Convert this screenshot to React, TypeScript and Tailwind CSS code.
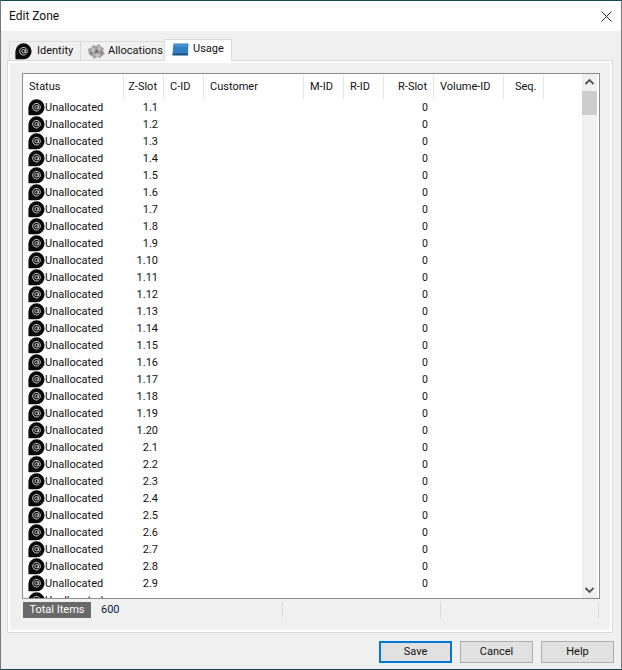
import React from "react";

const font = { fontFamily: 'Roboto, "Open Sans", sans-serif' };

function AtIcon({ className = "" }: { className?: string }) {
  return (
    <svg width="17" height="17" viewBox="0 0 17 17" className={className}>
      <path d="M8.6 0.3a8 8 0 0 1 8 8a8 8 0 0 1-8 8H1.4a1 1 0 0 1-1-1V8.3A8.2 8.2 0 0 1 8.6 0.3z" fill="#0a0a0a" />
      <circle cx="8.6" cy="8.2" r="1.7" fill="none" stroke="#cfcfcf" strokeWidth="1" />
      <path d="M10.3 6.5v2.6a1 1 0 0 0 2 0V8.2a3.8 3.8 0 1 0-1.6 3.1" fill="none" stroke="#cfcfcf" strokeWidth="1" />
    </svg>
  );
}

function GearBlob() {
  return (
    <svg width="18" height="15" viewBox="0 0 18 15">
      <path d="M1 5l4-2 1-2 3 1 3-2 2 3 3 1-1 3 2 3-3 2-2 2-3-1-3 2-2-3-3-1z" fill="#a3a3a3" />
      <path d="M4 3l4 2-2 4zM11 2l3 3-3 2zM7 10l4-1 2 3-4 1z" fill="#c4c4c4" />
      <path d="M9 5l3 3-4 2z" fill="#6e6e6e" />
      <path d="M2 9l3-1 1 3zM13 8l3-1-1 4z" fill="#808080" />
    </svg>
  );
}

function BlueCard() {
  return (
    <svg width="17" height="13" viewBox="0 0 17 13">
      <path d="M1.5 0.5h15l-0.5 10.5H0.5z" fill="#2f80c2" />
      <path d="M0.5 10.5h15.5v2H0.5z" fill="#1d4f7c" />
      <path d="M3 1.5h12.5l-0.2 2H2.8z" fill="#4a98d4" />
    </svg>
  );
}

const columns = [
  { label: "Status", w: "w-[101px]", align: "text-left pl-[6px]" },
  { label: "Z-Slot", w: "w-[40px]", align: "text-right pr-[6px]" },
  { label: "C-ID", w: "w-[40px]", align: "text-left pl-[6px]" },
  { label: "Customer", w: "w-[100px]", align: "text-left pl-[6px]" },
  { label: "M-ID", w: "w-[40px]", align: "text-left pl-[6px]" },
  { label: "R-ID", w: "w-[40px]", align: "text-left pl-[6px]" },
  { label: "R-Slot", w: "w-[50px]", align: "text-right pr-[6px]" },
  { label: "Volume-ID", w: "w-[70px]", align: "text-left pl-[6px]" },
  { label: "Seq.", w: "w-[40px]", align: "text-left pl-[11px]" },
];

const slots: string[] = [];
for (let i = 1; i <= 20; i++) slots.push(`1.${i}`);
for (let i = 1; i <= 9; i++) slots.push(`2.${i}`);

export default function App() {
  return (
    <div
      className="w-[622px] h-[670px] flex flex-col bg-[#f0f0f0] border border-[#6f7a7a] border-t-[#17494f] border-b-[#17494f] text-[11px] text-[#111] overflow-hidden"
      style={font}
    >
      <div className="h-[30px] shrink-0 bg-white flex items-center justify-between pl-[8px] pr-[9px]">
        <span className="text-[12px]">Edit Zone</span>
        <svg width="11" height="11" viewBox="0 0 11 11">
          <path d="M0.5 0.5l10 10M10.5 0.5l-10 10" stroke="#222" strokeWidth="1" fill="none" />
        </svg>
      </div>

      <div className="flex-1 flex flex-col pl-[6px] pr-[8px] pt-[7px]">
        <div className="flex h-[22px] pl-[2px] items-end relative z-10">
          <div className="h-[19px] w-[72px] flex items-center gap-[5px] pl-[5px] bg-[#f0f0f0] border border-b-0 border-[#d9d9d9]">
            <AtIcon />
            <span>Identity</span>
          </div>
          <div className="h-[19px] w-[84px] flex items-center gap-[3px] pl-[6px] bg-[#f0f0f0] border border-b-0 border-l-0 border-[#d9d9d9]">
            <GearBlob />
            <span>Allocations</span>
          </div>
          <div className="h-[22px] w-[67px] flex items-center gap-[4px] pl-[7px] pb-[2px] bg-white border border-b-0 border-l-0 border-[#d9d9d9] -mb-[1px]">
            <BlueCard />
            <span>Usage</span>
          </div>
        </div>

        <div className="h-[573px] border border-[#d9d9d9] bg-white pt-[2px] pl-[2px] pr-[2px] pb-[2px]">
          <div className="h-full bg-[#f0f0f0] pt-[10px] pl-[12px] pr-[10px] flex flex-col">
            <div className="h-[526px] shrink-0 border border-[#8c8c94] bg-white flex overflow-hidden">
              <div className="flex-1 flex flex-col min-w-0 overflow-hidden">
                <div className="flex h-[25px] shrink-0 pt-[1px]">
                  {columns.map((c) => (
                    <div
                      key={c.label}
                      className={`${c.w} ${c.align} h-[24px] leading-[24px] border-r border-[#e5e5e5] whitespace-nowrap`}
                    >
                      {c.label}
                    </div>
                  ))}
                </div>
                {slots.map((s) => (
                  <div key={s} className="flex h-[17px] shrink-0 items-center">
                    <div className="w-[101px] flex items-center pl-[5px]">
                      <AtIcon className="shrink-0" />
                      <span className="pt-[2px]">Unallocated</span>
                    </div>
                    <div className="w-[40px] text-right pr-[6px] pt-[2px]">{s}</div>
                    <div className="w-[220px]" />
                    <div className="w-[50px] text-right pr-[6px] text-[10.5px]">0</div>
                  </div>
                ))}
                <div className="flex h-[17px] shrink-0 items-center">
                  <div className="w-[101px] flex items-center pl-[5px]">
                    <AtIcon className="shrink-0" />
                    <span className="pt-[2px]">Unallocated</span>
                  </div>
                </div>
              </div>
              <div className="w-[15px] mr-[2px] shrink-0 bg-[#f0f0f0] flex flex-col items-center">
                <svg width="15" height="17" viewBox="0 0 15 17" className="shrink-0">
                  <path d="M3.5 10l4-4 4 4" fill="none" stroke="#555" strokeWidth="1.8" />
                </svg>
                <div className="w-[15px] h-[24px] bg-[#cdcdcd] shrink-0" />
                <div className="flex-1" />
                <svg width="15" height="17" viewBox="0 0 15 17" className="shrink-0">
                  <path d="M3.5 7l4 4 4-4" fill="none" stroke="#555" strokeWidth="1.8" />
                </svg>
              </div>
            </div>

            <div className="h-[16px] mt-[3px] flex items-stretch">
              <div className="w-[68px] ml-[1px] pt-[1px] bg-[#696969] text-white flex items-center justify-center">Total Items</div>
              <div className="w-[192px] pl-[10px] pt-[1px] flex items-center text-[#0a1a40] border-r border-[#d9d9d9]">600</div>
              <div className="w-[158px] border-r border-[#d9d9d9]" />
              <div className="w-[158px] border-r border-[#d9d9d9]" />
            </div>
          </div>
        </div>

        <div className="flex justify-end gap-[8px] mt-[8px] -mr-[1px]">
          <button className="w-[73px] h-[22px] bg-[#e1e1e1] border-2 border-[#0078d7] flex items-center justify-center">Save</button>
          <button className="w-[73px] h-[22px] bg-[#e1e1e1] border border-[#adadad] flex items-center justify-center">Cancel</button>
          <button className="w-[73px] h-[22px] bg-[#e1e1e1] border border-[#adadad] flex items-center justify-center">Help</button>
        </div>
      </div>
    </div>
  );
}
